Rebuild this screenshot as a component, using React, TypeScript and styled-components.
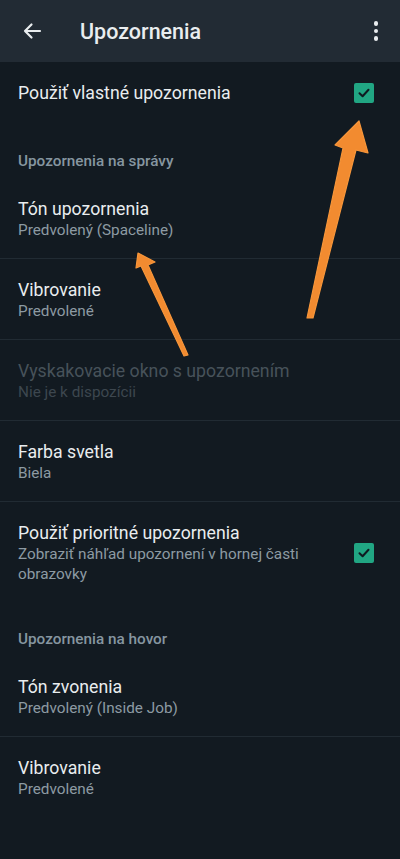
import React, { ReactElement } from 'react';
import styled, { createGlobalStyle } from 'styled-components';

const GlobalStyle = createGlobalStyle`
  html, body {
    margin: 0;
    padding: 0;
    background: #121a21;
  }
  body {
    font-family: Roboto, "Noto Sans", "Liberation Sans", sans-serif;
    -webkit-font-smoothing: antialiased;
  }
`;

interface IItem {
  title: string;
  subtitle?: string;
  disabled?: boolean;
  checked?: boolean;
  divider?: boolean;
}

const messageItems: IItem[] = [
  { title: 'Tón upozornenia', subtitle: 'Predvolený (Spaceline)', divider: true },
  { title: 'Vibrovanie', subtitle: 'Predvolené', divider: true },
  { title: 'Vyskakovacie okno s upozornením', subtitle: 'Nie je k dispozícii', disabled: true, divider: true },
  { title: 'Farba svetla', subtitle: 'Biela', divider: true },
  {
    title: 'Použiť prioritné upozornenia',
    subtitle: 'Zobraziť náhľad upozornení v hornej časti obrazovky',
    checked: true,
  },
];

const callItems: IItem[] = [
  { title: 'Tón zvonenia', subtitle: 'Predvolený (Inside Job)', divider: true },
  { title: 'Vibrovanie', subtitle: 'Predvolené' },
];

const Check = (): ReactElement => (
  <SCheckbox>
    <svg width="14" height="14" viewBox="0 0 14 14">
      <path d="M2.5 7.2 L5.6 10.2 L11.5 3.8" fill="none" stroke="#0f1a20" strokeWidth="2" strokeLinecap="round" strokeLinejoin="round" />
    </svg>
  </SCheckbox>
);

const Row = ({ title, subtitle, disabled, checked }: IItem): ReactElement => (
  <SRow>
    <STexts>
      <STitle $disabled={disabled}>{title}</STitle>
      {subtitle && <SSubtitle $disabled={disabled}>{subtitle}</SSubtitle>}
    </STexts>
    {checked && <Check />}
  </SRow>
);

const renderItems = (items: IItem[]) =>
  items.map((item) => (
    <React.Fragment key={item.title}>
      <Row {...item} />
      {item.divider && <SDivider />}
    </React.Fragment>
  ));

export default function App(): ReactElement {
  return (
    <>
      <GlobalStyle />
      <SScreen>
        <SHeader>
          <SIconButton aria-label="Späť">
            <svg width="20" height="20" viewBox="0 0 20 20">
              <path d="M18 10 H3 M9.5 3.5 L3 10 L9.5 16.5" fill="none" stroke="#e9edef" strokeWidth="2.2" strokeLinecap="round" strokeLinejoin="round" />
            </svg>
          </SIconButton>
          <SHeaderTitle>Upozornenia</SHeaderTitle>
          <SMenu aria-label="Menu">
            <SDot />
            <SDot />
            <SDot />
          </SMenu>
        </SHeader>

        <STopRow>
          <STitle>Použiť vlastné upozornenia</STitle>
          <Check />
        </STopRow>

        <SSectionHeader>Upozornenia na správy</SSectionHeader>
        {renderItems(messageItems)}

        <SSectionHeader>Upozornenia na hovor</SSectionHeader>
        {renderItems(callItems)}

        <SOverlay width="400" height="859" viewBox="0 0 400 859">
          <polygon
            points="359,121 368,153 356,150 313,318 307,318 343,148 335,145"
            fill="#f28b30"
            stroke="#f7963a"
            strokeWidth="1.2"
            strokeLinejoin="round"
          />
          <polygon
            points="138,253 155,262 148,265 188,355 184,356 141,266 136,268"
            fill="#f28b30"
            stroke="#f7963a"
            strokeWidth="1.2"
            strokeLinejoin="round"
          />
        </SOverlay>
      </SScreen>
    </>
  );
}

const SScreen = styled.div`
  position: relative;
  width: 400px;
  min-height: 859px;
  background: #121a21;
  overflow: hidden;
`;

const SHeader = styled.header`
  display: flex;
  align-items: center;
  height: 62px;
  padding: 0 14px 0 12px;
  box-sizing: border-box;
  background: #222b34;
`;

const SIconButton = styled.div`
  display: flex;
  align-items: center;
  justify-content: center;
  width: 40px;
  height: 40px;
`;

const SHeaderTitle = styled.h1`
  flex: 1;
  margin: 0 0 0 28px;
  font-size: 21.5px;
  font-weight: 500;
  color: #e9edef;
`;

const SMenu = styled.div`
  display: flex;
  flex-direction: column;
  align-items: center;
  gap: 3px;
  width: 20px;
`;

const SDot = styled.span`
  width: 4.5px;
  height: 4.5px;
  border-radius: 50%;
  background: #e9edef;
`;

const STopRow = styled.div`
  display: flex;
  align-items: center;
  justify-content: space-between;
  height: 62px;
  padding: 0 26px 0 18px;
`;

const SSectionHeader = styled.div`
  padding: 27px 18px 7px;
  line-height: 20px;
  font-size: 15.3px;
  font-weight: 500;
  color: #8696a0;
`;

const SRow = styled.div`
  display: flex;
  align-items: center;
  justify-content: space-between;
  min-height: 80px;
  padding: 20px 26px 18px 18px;
  box-sizing: border-box;
`;

const STexts = styled.div`
  display: flex;
  flex-direction: column;
  max-width: 300px;
`;

const STitle = styled.div<{ $disabled?: boolean }>`
  font-size: 17.7px;
  line-height: 22px;
  color: ${({ $disabled }) => ($disabled ? '#47525a' : '#e9edef')};
`;

const SSubtitle = styled.div<{ $disabled?: boolean }>`
  font-size: 15.3px;
  line-height: 20px;
  color: ${({ $disabled }) => ($disabled ? '#3d474f' : '#8d9aa3')};
`;

const SDivider = styled.div`
  height: 1px;
  background: #212b33;
`;

const SCheckbox = styled.span`
  display: flex;
  align-items: center;
  justify-content: center;
  flex-shrink: 0;
  width: 20px;
  height: 20px;
  border-radius: 2px;
  background: #21a683;
`;

const SOverlay = styled.svg`
  position: absolute;
  top: 0;
  left: 0;
  pointer-events: none;
`;
